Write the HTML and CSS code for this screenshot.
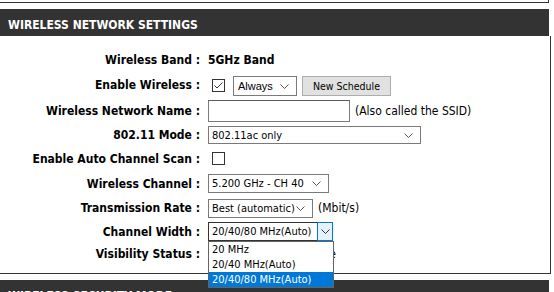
FILE: index.html
```html
<!DOCTYPE html>
<html lang="en">
<head>
    <meta charset="UTF-8">
    <meta name="viewport" content="width=device-width, initial-scale=1.0">
    <title>Wireless Settings</title>
    <link rel="stylesheet" href="styles.css">
</head>
<body>
    <div class="prev-box"></div>

    <div class="section">
        <div class="section-title">WIRELESS NETWORK SETTINGS</div>
        <div class="section-body">
            <div class="form-grid">
                <div class="label">Wireless Band :</div>
                <div class="field"><span class="value">5GHz Band</span></div>

                <div class="label">Enable Wireless :</div>
                <div class="field">
                    <span class="checkbox">
                        <svg width="11" height="11" viewBox="0 0 11 11"><polyline points="1.5,5.5 4,8 9.5,2.5" fill="none" stroke="#333" stroke-width="1"/></svg>
                    </span>
                    <div class="select select-always arial"><span>Always</span><svg class="chev" width="9" height="5" viewBox="0 0 9 5"><polyline points="0.5,0.5 4.5,4.5 8.5,0.5" fill="none" stroke="#555" stroke-width="1"/></svg></div>
                    <span class="button">New Schedule</span>
                </div>

                <div class="label">Wireless Network Name :</div>
                <div class="field">
                    <span class="text-input"></span>
                    <span class="note">(Also called the SSID)</span>
                </div>

                <div class="label">802.11 Mode :</div>
                <div class="field">
                    <div class="select select-mode"><span>802.11ac only</span><svg class="chev" width="9" height="5" viewBox="0 0 9 5"><polyline points="0.5,0.5 4.5,4.5 8.5,0.5" fill="none" stroke="#555" stroke-width="1"/></svg></div>
                </div>

                <div class="label">Enable Auto Channel Scan :</div>
                <div class="field"><span class="checkbox"></span></div>

                <div class="label">Wireless Channel :</div>
                <div class="field">
                    <div class="select select-channel"><span>5.200 GHz - CH 40</span><svg class="chev" width="9" height="5" viewBox="0 0 9 5"><polyline points="0.5,0.5 4.5,4.5 8.5,0.5" fill="none" stroke="#555" stroke-width="1"/></svg></div>
                </div>

                <div class="label">Transmission Rate :</div>
                <div class="field">
                    <div class="select select-rate"><span>Best (automatic)</span><svg class="chev" width="9" height="5" viewBox="0 0 9 5"><polyline points="0.5,0.5 4.5,4.5 8.5,0.5" fill="none" stroke="#555" stroke-width="1"/></svg></div>
                    <span class="note">(Mbit/s)</span>
                </div>

                <div class="label">Channel Width :</div>
                <div class="field">
                    <div class="select select-width is-open">
                        <span>20/40/80 MHz(Auto)</span>
                        <span class="chev-box"><svg width="9" height="5" viewBox="0 0 9 5"><polyline points="0.5,0.5 4.5,4.5 8.5,0.5" fill="none" stroke="#333" stroke-width="1"/></svg></span>
                        <ul class="dropdown">
                            <li>20 MHz</li>
                            <li>20/40 MHz(Auto)</li>
                            <li class="selected">20/40/80 MHz(Auto)</li>
                        </ul>
                    </div>
                </div>

                <div class="label">Visibility Status :</div>
                <div class="field">
                    <span class="radio"></span><span class="radio-text">Visible</span>
                    <span class="radio"></span><span class="radio-text">Invisible</span>
                </div>
            </div>
        </div>
    </div>

    <div class="section section-next">
        <div class="section-title">WIRELESS SECURITY MODE</div>
    </div>
</body>
</html>
```

FILE: styles.css
```css
body {
    margin: 0;
    background-color: #fff;
    font-family: "DejaVu Sans Condensed", "DejaVu Sans", sans-serif;
    font-stretch: condensed;
    font-size: 12px;
    color: #000;
    overflow: hidden;
}

.prev-box {
    width: 548px;
    height: 2px;
    border-bottom: 1px solid #333;
    border-right: 1px solid #333;
}

.section {
    width: 551px;
    margin-top: 6px;
}

.section-title {
    width: 549px;
    height: 27px;
    line-height: 32px;
    padding-left: 8px;
    box-sizing: border-box;
    background-color: #333;
    color: #fff;
    font-weight: bold;
    font-size: 12px;
    overflow: hidden;
}

.section-body {
    border-right: 1px solid #333;
    border-bottom: 1px solid #333;
    padding: 11px 0 8px;
}

.form-grid {
    display: grid;
    grid-template-columns: 200px auto;
    grid-template-rows: 25px 26px 25px 23px 25px 25px 24px 23px 22px;
    column-gap: 8px;
}

.label {
    display: flex;
    align-items: center;
    justify-content: flex-end;
    font-weight: bold;
    white-space: nowrap;
}

.field {
    display: flex;
    align-items: center;
    white-space: nowrap;
}

.value {
    font-weight: bold;
}

.checkbox {
    width: 13px;
    height: 13px;
    box-sizing: border-box;
    border: 1px solid #333;
    margin: 0 8px 0 4px;
    display: flex;
    background: #fff;
}

.radio {
    width: 13px;
    height: 13px;
    box-sizing: border-box;
    border: 1px solid #333;
    border-radius: 50%;
    margin: 0 3px 0 4px;
}

.radio-text {
    margin-right: 8px;
}

.select {
    position: relative;
    display: flex;
    align-items: center;
    height: 19px;
    box-sizing: border-box;
    border: 1px solid #7a7a7a;
    background: #fff;
    padding-left: 3px;
    font-size: 11px;
}

.select .chev {
    position: absolute;
    right: 7px;
    top: 6px;
}

.arial {
    font-family: "Liberation Sans", Arial, sans-serif;
    font-stretch: normal;
    font-size: 11px;
    padding-left: 4px;
}

.select-always {
    width: 64px;
    height: 20px;
    margin-top: 1px;
}

.select-always .chev {
    top: 7px;
}

.select-mode {
    width: 213px;
    height: 18px;
    margin-top: 1px;
}

.select-channel {
    width: 121px;
}

.select-rate {
    width: 105px;
}

.select-width {
    width: 125px;
    border-color: #333;
}

.chev-box {
    position: absolute;
    right: -1px;
    top: -1px;
    width: 16px;
    height: 19px;
    box-sizing: border-box;
    border: 1px solid #0078d7;
    background: #e5f1fb;
    display: flex;
    align-items: center;
    justify-content: center;
}

.dropdown {
    position: absolute;
    left: -1px;
    top: 18px;
    width: 126px;
    box-sizing: border-box;
    margin: 0;
    padding: 0;
    list-style: none;
    background: #fff;
    border: 1px solid #646464;
    z-index: 2;
}

.dropdown li {
    height: 15px;
    line-height: 15px;
    padding-left: 3px;
}

.dropdown li.selected {
    background: #0078d7;
    color: #fff;
}

.button {
    height: 20px;
    width: 89px;
    box-sizing: border-box;
    margin-left: 5px;
    margin-top: 1px;
    border: 1px solid #adadad;
    background: #e1e1e1;
    display: flex;
    align-items: center;
    justify-content: center;
    font-size: 10.5px;
}

.text-input {
    width: 142px;
    height: 22px;
    box-sizing: border-box;
    border: 1px solid #7a7a7a;
    border-top-color: #5a5a5a;
    background: #fff;
}

.note {
    margin-left: 5px;
}
```
